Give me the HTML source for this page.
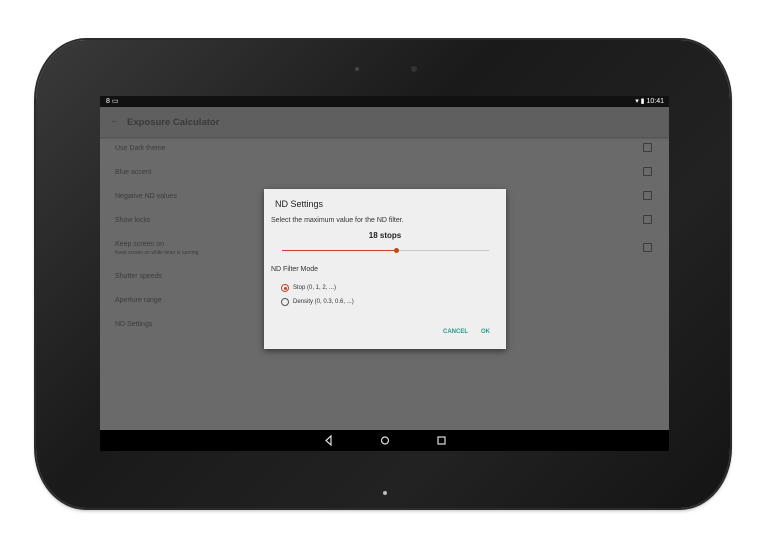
<!DOCTYPE html>
<html><head><style>
body{margin:0;width:768px;height:554px;background:#fff;position:relative;overflow:hidden;font-family:"Liberation Sans",sans-serif}
.dev{position:absolute;left:36px;top:40px;width:694px;height:468px;border-radius:50px/60px;background:linear-gradient(135deg,#3a3a3a,#1a1a1a 40%,#222 70%,#141414);box-shadow:0 0 0 2px #2a2a2a,0 2px 4px rgba(0,0,0,.4)}
.scr{position:absolute;left:100px;top:96px;width:569px;height:355px;background:#6a6a6a;overflow:hidden}
.sb{position:absolute;left:0;top:0;width:569px;height:11px;background:#111;color:#fff;font-size:7px}
.tb{position:absolute;left:0;top:11px;width:569px;height:30px;background:#5f5f5f;box-shadow:0 1px 2px rgba(0,0,0,.3);color:#3a3a3a;font-size:9.5px;font-weight:bold}
.it{position:absolute;left:15px;font-size:7px;color:#3c3c3c}
.cb{position:absolute;left:543px;width:7px;height:7px;border:1px solid #3c3c3c;border-radius:1px}
.nav{position:absolute;left:0;top:334px;width:569px;height:21px;background:#000}
.dlg{position:absolute;left:264px;top:189px;width:242px;height:160px;background:#efefef;box-shadow:0 2px 6px rgba(0,0,0,.5);font-size:7px;color:#333}
</style></head><body>
<div class="dev"></div>
<div style="position:absolute;left:355px;top:67px;width:4px;height:4px;border-radius:50%;background:#444"></div>
<div style="position:absolute;left:411px;top:66px;width:6px;height:6px;border-radius:50%;background:#333"></div>
<div style="position:absolute;left:383px;top:491px;width:4px;height:4px;border-radius:50%;background:#bbb"></div>
<div class="scr">
<div class="sb"><span style="position:absolute;left:6px;top:1px">8 ▭</span><span style="position:absolute;right:5px;top:1px">▾ ▮ 10:41</span></div>
<div class="tb"><span style="position:absolute;left:10px;top:8px;font-weight:normal">←</span><span style="position:absolute;left:27px;top:10px">Exposure Calculator</span></div>
<div class="it" style="top:49px">Use Dark theme</div><div class="cb" style="top:47px"></div>
<div class="it" style="top:73px">Blue accent</div><div class="cb" style="top:71px"></div>
<div class="it" style="top:97px">Negative ND values</div><div class="cb" style="top:95px"></div>
<div class="it" style="top:121px">Show locks</div><div class="cb" style="top:119px"></div>
<div class="it" style="top:145px">Keep screen on</div><div class="it" style="top:154px;font-size:5px">Keep screen on while timer is running</div><div class="cb" style="top:147px"></div>
<div class="it" style="top:177px">Shutter speeds</div>
<div class="it" style="top:201px">Aperture range</div>
<div class="it" style="top:225px">ND Settings</div>
<div class="nav"><svg width="569" height="21"><path d="M231 6l-5 4.5 5 4.5z" fill="none" stroke="#ddd" stroke-width="1.2"/><circle cx="285" cy="10.5" r="3.5" fill="none" stroke="#ddd" stroke-width="1.2"/><rect x="338" y="7" width="7" height="7" fill="none" stroke="#ddd" stroke-width="1.2"/></svg></div>
</div>
<div class="dlg">
<div style="position:absolute;left:11px;top:10px;font-size:9px;color:#222">ND Settings</div>
<div style="position:absolute;left:7px;top:28px">Select the maximum value for the ND filter.</div>
<div style="position:absolute;left:0;width:242px;top:42px;text-align:center;font-weight:bold;font-size:8px;color:#222">18 stops</div>
<div style="position:absolute;left:18px;top:61px;width:115px;height:1px;background:#c0452b"></div>
<div style="position:absolute;left:133px;top:61px;width:92px;height:1px;background:#c8c8c8"></div>
<div style="position:absolute;left:130px;top:59px;width:5px;height:5px;border-radius:50%;background:#c0452b"></div>
<div style="position:absolute;left:7px;top:77px">ND Filter Mode</div>
<div style="position:absolute;left:17px;top:95px;width:6px;height:6px;border:1px solid #c0452b;border-radius:50%"><div style="margin:1.5px;width:3px;height:3px;border-radius:50%;background:#c0452b"></div></div>
<div style="position:absolute;left:29px;top:96px;font-size:6px">Stop (0, 1, 2, ...)</div>
<div style="position:absolute;left:17px;top:109px;width:6px;height:6px;border:1px solid #555;border-radius:50%"></div>
<div style="position:absolute;left:29px;top:110px;font-size:6px">Density (0, 0.3, 0.6, ...)</div>
<div style="position:absolute;left:179px;top:140px;font-size:6px;font-weight:bold;color:#2a9a8a">CANCEL</div>
<div style="position:absolute;left:217px;top:140px;font-size:6px;font-weight:bold;color:#2a9a8a">OK</div>
</div>
</body></html>
